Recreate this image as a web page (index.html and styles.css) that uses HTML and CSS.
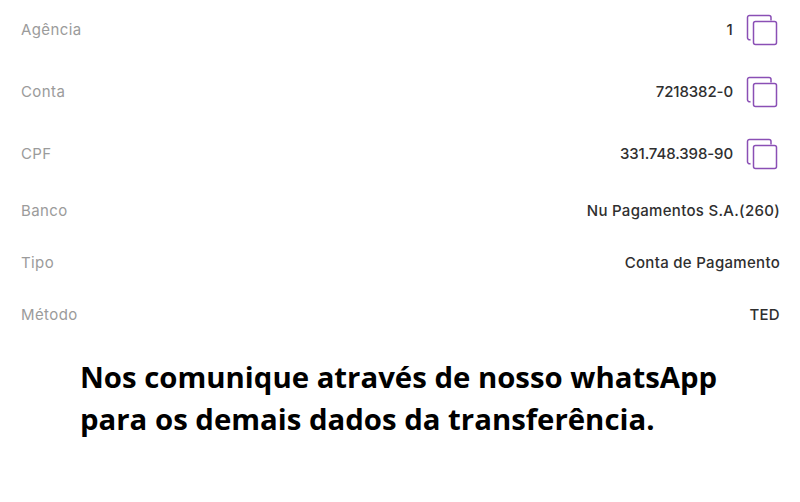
FILE: index.html
```html
<!DOCTYPE html>
<html lang="pt-BR">
<head>
    <meta charset="UTF-8">
    <meta name="viewport" content="width=device-width, initial-scale=1.0">
    <title>Dados bancários</title>
    <link rel="stylesheet" href="styles.css">
</head>
<body>
    <!-- Dados da conta -->
    <div class="details">
        <div class="row row-copy">
            <span class="label">Agência</span>
            <span class="value">1</span>
            <svg class="copy" width="32" height="32" viewBox="0 0 32 32"><path d="M4.500 25.500A2 2 0 0 1 1.500 23.500V3.500A2 2 0 0 1 3.500 1.500H23A2 2 0 0 1 25 3.500V6.500"/><rect x="7.500" y="7.500" width="23" height="23" rx="2"/></svg>
        </div>
        <div class="row row-copy">
            <span class="label">Conta</span>
            <span class="value value-number">7218382-0</span>
            <svg class="copy" width="32" height="32" viewBox="0 0 32 32"><path d="M4.500 25.500A2 2 0 0 1 1.500 23.500V3.500A2 2 0 0 1 3.500 1.500H23A2 2 0 0 1 25 3.500V6.500"/><rect x="7.500" y="7.500" width="23" height="23" rx="2"/></svg>
        </div>
        <div class="row row-copy">
            <span class="label">CPF</span>
            <span class="value value-number">331.748.398-90</span>
            <svg class="copy" width="32" height="32" viewBox="0 0 32 32"><path d="M4.500 25.500A2 2 0 0 1 1.500 23.500V3.500A2 2 0 0 1 3.500 1.500H23A2 2 0 0 1 25 3.500V6.500"/><rect x="7.500" y="7.500" width="23" height="23" rx="2"/></svg>
        </div>
        <div class="row">
            <span class="label">Banco</span>
            <span class="value">Nu Pagamentos S.A.(260)</span>
        </div>
        <div class="row">
            <span class="label">Tipo</span>
            <span class="value">Conta de Pagamento</span>
        </div>
        <div class="row">
            <span class="label">Método</span>
            <span class="value">TED</span>
        </div>
    </div>

    <p class="notice">Nos comunique através de nosso whatsApp<br>para os demais dados da transferência.</p>
</body>
</html>
```

FILE: styles.css
```css
body {
    font-family: Inter, "Liberation Sans", sans-serif;
    margin: 0;
    background-color: #fff;
    color: #333;
}
.details {
    margin-top: -2px;
    padding: 0 20px 0 21px;
}
.row {
    display: flex;
    align-items: center;
    height: 52px;
    font-size: 15px;
    letter-spacing: 0.4px;
}
.row-copy {
    height: 62px;
    padding-right: 2px;
}
.label {
    flex: 1;
    color: #9b9b9b;
}
.value {
    color: #2f2f2f;
    font-weight: 500;
    letter-spacing: 0.3px;
}
.value-number {
    letter-spacing: -0.1px;
}
.copy {
    margin-top: 2px;
    margin-left: 13px;
    fill: none;
    stroke: #8a4fb5;
    stroke-width: 1.5;
}
.notice {
    margin: 16px 0 0 80px;
    font-family: "Open Sans", "Noto Sans", sans-serif;
    font-size: 29.35px;
    font-weight: 700;
    line-height: 42px;
    color: #000;
}
```
